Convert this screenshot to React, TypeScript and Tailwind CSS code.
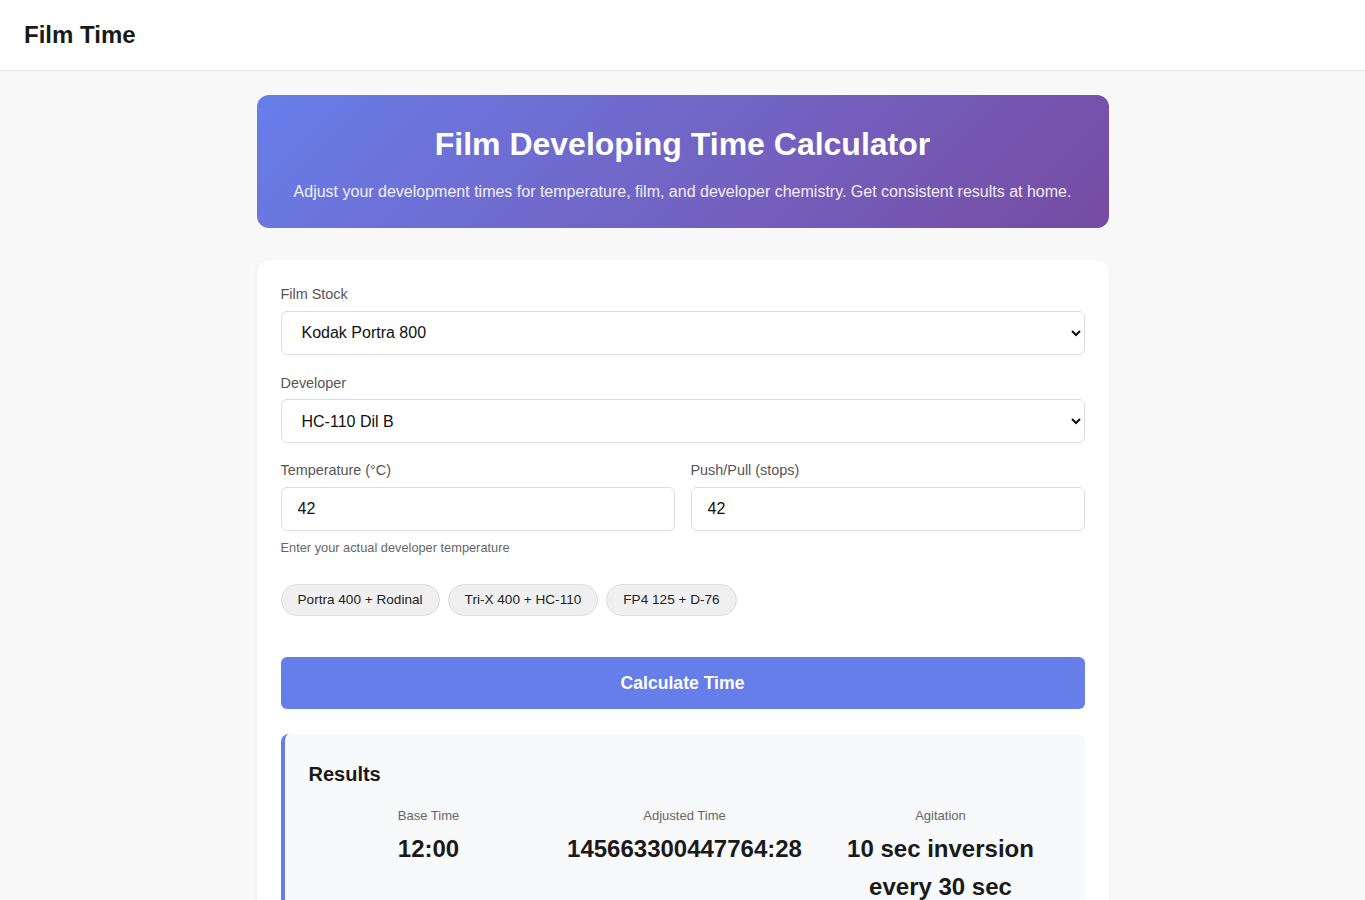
import React from "react";

const labelCls = "block text-[14.4px] leading-[1.5] text-[#555] mb-[5px]";
const fieldCls = "w-full h-[44px] border border-[#ddd] rounded-md px-4 text-[16px] bg-white text-[#111]";

export default function App() {
  return (
    <div className="min-h-screen bg-[#f8f8f8] text-[#222] leading-[1.6]" style={{ fontFamily: '"Liberation Sans", Arial, sans-serif' }}>
      <header className="h-[71px] bg-white border-b border-[#e5e5e5] flex items-center px-6">
        <h1 className="text-[24px] leading-[1.6] font-bold text-[#1a1a1a]">Film Time</h1>
      </header>
      <main className="w-[852px] mx-auto pt-6 pb-10">
        <section className="rounded-xl bg-linear-135 from-[#667eea] to-[#764ba2] text-white text-center h-[133px] flex flex-col items-center pt-[30px]">
          <h2 className="text-[32px] font-bold leading-[1.2]">Film Developing Time Calculator</h2>
          <p className="mt-[16px] text-[16px] leading-[1.6] opacity-90">Adjust your development times for temperature, film, and developer chemistry. Get consistent results at home.</p>
        </section>

        <section className="mt-8 bg-white rounded-xl shadow-[0_1px_4px_rgba(0,0,0,0.06)] p-6">
          <div className="mb-[18px]">
            <label className={labelCls}>Film Stock</label>
            <select className={fieldCls} defaultValue="p800">
              <option value="p800">Kodak Portra 800</option>
            </select>
          </div>
          <div className="mb-[17px]">
            <label className={labelCls}>Developer</label>
            <select className={fieldCls} defaultValue="hc">
              <option value="hc">HC-110 Dil B</option>
            </select>
          </div>
          <div className="grid grid-cols-2 gap-4">
            <div>
              <label className={labelCls}>Temperature (°C)</label>
              <input className={fieldCls} defaultValue="42" />
            </div>
            <div>
              <label className={labelCls}>Push/Pull (stops)</label>
              <input className={fieldCls} defaultValue="42" />
            </div>
          </div>
          <p className="mt-[7px] text-[12.8px] leading-[1.6] text-[#666]">Enter your actual developer temperature</p>

          <div className="mt-[26px] flex gap-2">
            {["Portra 400 + Rodinal", "Tri-X 400 + HC-110", "FP4 125 + D-76"].map((c) => (
              <button key={c} className="h-8 px-4 rounded-full bg-[#f0f0f0] border border-[#ddd] text-[13.6px] text-[#222]">
                {c}
              </button>
            ))}
          </div>

          <button className="mt-[41px] w-full h-[52px] rounded-md bg-[#667eea] text-white text-[17.6px] font-bold">Calculate Time</button>

          <div className="mt-[25px] bg-[#f8f9fa] border-l-4 border-[#667eea] rounded-lg px-6 pt-6 pb-6">
            <h3 className="text-[20px] font-bold leading-8 text-[#1a1a1a]">Results</h3>
            <div className="mt-[16px] grid grid-cols-3 gap-4 text-center">
              {[
                ["Base Time", "12:00"],
                ["Adjusted Time", "145663300447764:28"],
                ["Agitation", "10 sec inversion every 30 sec"],
              ].map(([l, v]) => (
                <div key={l}>
                  <div className="text-[13px] leading-[1.6] text-[#666]">{l}</div>
                  <div className="mt-[3px] text-[24px] leading-[1.6] font-bold text-[#1a1a1a]">{v}</div>
                </div>
              ))}
            </div>
          </div>
        </section>
      </main>
    </div>
  );
}
